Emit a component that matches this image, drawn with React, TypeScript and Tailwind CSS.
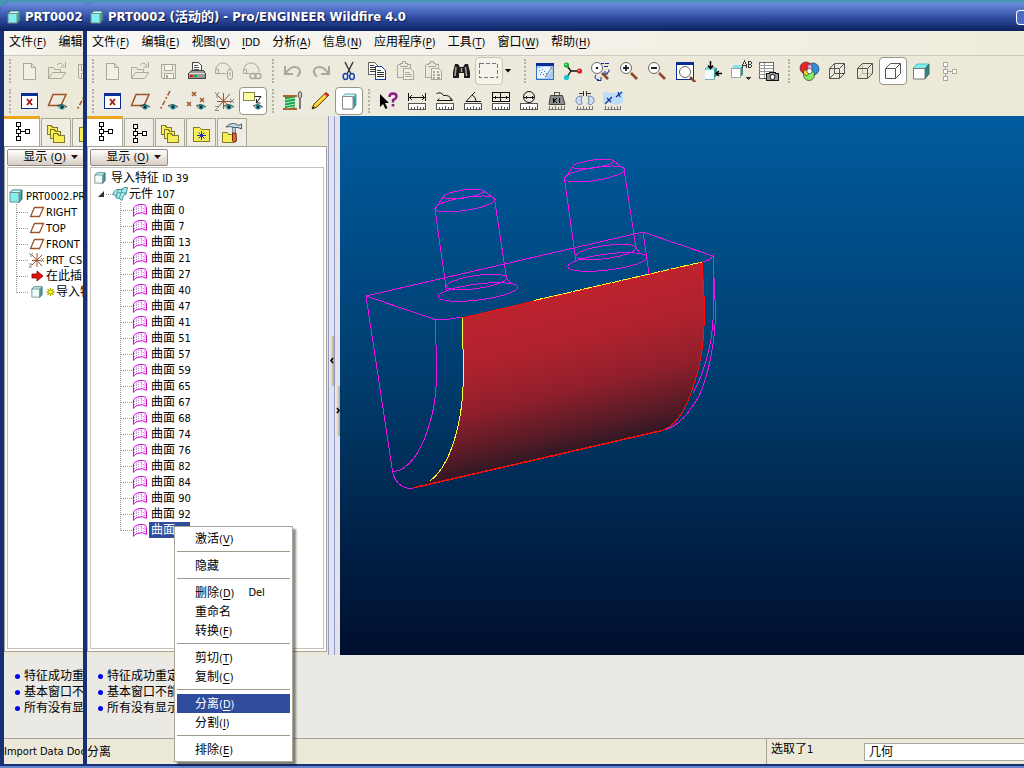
import { Fragment, type ReactNode } from "react"
import clsx from "clsx"

const GREY = "#aca899"
const BROWN = "#9c5428"
const NAVY = "#0a2c96"

type IconProps = { children: ReactNode; size?: number }
const Icon = ({ children, size = 22 }: IconProps) => (
    <svg width={size} height={size} viewBox={`0 0 ${size} ${size}`} fill="none" shapeRendering="crispEdges" className="shrink-0">
        {children}
    </svg>
)

/* small parts shared by several icons */
const Eye = ({ x = 16, y = 17 }: { x?: number; y?: number }) => (
    <g shapeRendering="auto">
        <path d={`M${x - 5} ${y - 1}Q${x} ${y - 4} ${x + 5} ${y}`} stroke="#333" />
        <path d={`M${x - 4} ${y}Q${x} ${y - 3} ${x + 4} ${y}Q${x} ${y + 4} ${x - 4} ${y}Z`} fill="#cfe8e6" stroke="#568" strokeWidth=".5" />
        <circle cx={x} cy={y} r="2.4" fill="#0d7f80" />
        <circle cx={x} cy={y} r="1" fill="#012" />
    </g>
)

const Ruler = () => (
    <>
        <rect x="2.5" y="13.500" width="17" height="6" fill="#fff" stroke="#555" />
        <path d="M5.500 20v-3M8.500 20v-3M11.500 20v-4M14.500 20v-3M17.500 20v-3" stroke="#555" />
    </>
)

const Ticks = () => (
    <path d="M2 19.500h17M3.500 16v4M6.500 17v3M9.500 16v4M12.500 17v3M15.500 16v4M18.500 16v4" stroke="#777" />
)

const Lens = ({ children, x = 8, y = 8 }: { children?: ReactNode; x?: number; y?: number }) => (
    <g shapeRendering="auto">
        <path d={`M${x + 5} ${y + 5}l6 6`} stroke="#8a4b2a" strokeWidth="2.600" />
        <circle cx={x} cy={y} r="5.500" fill="#fff" stroke="#666" />
        {children}
    </g>
)

const Nodes = ({ color = "#000" }: { color?: string }) => (
    <g stroke={color}>
        <path d="M7.500 7v2M7.500 14v2M10 11.500h4" />
        <rect x="5.500" y="2.500" width="4" height="4" fill="#fff" />
        <rect x="5.500" y="9.500" width="4" height="4" fill="#fff" />
        <rect x="5.500" y="16.500" width="4" height="4" fill="#fff" />
        <rect x="14.500" y="9.500" width="4" height="4" fill="#fff" />
    </g>
)

const Solid = () => (
    <g shapeRendering="auto">
        <path d="M3 8.500L7 4h12l-4 4.500z" fill="#7df0f2" stroke="#4bbcc0" />
        <path d="M15 8.500L19 4v10l-4 5z" fill="#2f8284" stroke="#407070" />
        <path d="M3.500 8.500H15V19H3.500z" fill="#fff" stroke="#777" />
    </g>
)

const Wire = ({ mode }: { mode: "all" | "dim" | "front" }) => (
    <g stroke="#555">
        {mode !== "front" && (
            <path d="M8.500 4v9.500H19M3.500 18.500l5-5" stroke={mode === "dim" ? "#b9b6a8" : "#555"} shapeRendering="auto" />
        )}
        <path d="M3.500 8.500h10v10h-10zM3.500 8.500l5-5h10v10l-5 5M13.500 8.500l5-5" shapeRendering="auto" />
    </g>
)

const Clipboard = () => (
    <>
        <path d="M3.500 4.500h3v-1h2v-2h3v2h2v1h3v3M3.500 4.500v13h5M6 6.500h8" stroke={GREY} />
        <path d="M9.500 8.500h7l3 3v8h-10z" fill="#f2f0e4" stroke={GREY} />
    </>
)

const icons = {
    blank: <path d="M4.500 3.500h8l4 4v12h-12zM12.500 3.500v4h4" stroke={GREY} fill="#f2f0e6" />,
    open: (
        <>
            <path d="M1.500 18.500v-11h5l1 2h6v3M1.500 18.500l4-6h13l-4 6z" stroke={GREY} shapeRendering="auto" />
            <path d="M10 5q4-4 7 1M18.500 2v5h-5" stroke={GREY} shapeRendering="auto" />
        </>
    ),
    save: (
        <>
            <path d="M3.500 4.500h14v14h-13l-1-1z" stroke={GREY} />
            <path d="M6.500 4.500h8v6h-8zM6.500 13.500h9v5h-9z" fill="#f6f4ec" stroke={GREY} />
            <path d="M9 15v3" stroke={GREY} strokeWidth="2" />
        </>
    ),
    print: (
        <>
            <path d="M6.500 11V2.500h6l3 3V11" fill="#fff" stroke="#444" />
            <path d="M8 5.500h4M8 7.500h5M8 9.500h5" stroke="#555" />
            <path d="M2.500 13.500l3-3h12l2 3v5h-17z" fill="#9a9a98" stroke="#444" />
            <path d="M3 13.500h16" stroke="#ddd" />
            <path d="M4 16h3" stroke="#d11" strokeWidth="2" />
            <path d="M8 16h3" stroke="#1a3" strokeWidth="2" />
        </>
    ),
    sendPart: (
        <g stroke={GREY} shapeRendering="auto">
            <path d="M1.500 13.500V10Q3 3 9 3t8 7M1.500 13.500h11M1.500 9.500h3v4" />
            <rect x="13.500" y="9.500" width="5" height="10" rx="2.500" />
            <path d="M16 12v4" />
        </g>
    ),
    sendLink: (
        <g stroke={GREY} shapeRendering="auto">
            <path d="M1.500 13.500V10Q3 3 9 3t8 7v2M1.500 13.500h6M1.500 9.500h3v4" />
            <rect x="8" y="13.500" width="6" height="5" rx="2.500" strokeWidth="1.400" />
            <rect x="13" y="13.500" width="6" height="5" rx="2.500" strokeWidth="1.400" />
        </g>
    ),
    undo: <path d="M3 6v8h8M3.500 13.500Q10 4 17 8.500q3 4-2 8" stroke={GREY} strokeWidth="2" shapeRendering="auto" />,
    redo: <path d="M19 6v8h-8M18.500 13.500Q12 4 5 8.500q-3 4 2 8" stroke={GREY} strokeWidth="2" shapeRendering="auto" />,
    cut: (
        <g shapeRendering="auto">
            <path d="M7 2l6 12M15 2L9 14" stroke="#333" strokeWidth="1.400" />
            <ellipse cx="7.500" cy="16.500" rx="2.300" ry="3" stroke="#1b3fb5" strokeWidth="1.500" />
            <ellipse cx="14" cy="16.500" rx="2.300" ry="3" stroke="#1b3fb5" strokeWidth="1.500" />
        </g>
    ),
    copy: (
        <>
            <path d="M2.500 2.500h6l3 3v9h-9z" fill="#fff" stroke="#666" />
            <path d="M4 5.500h4M4 7.500h5M4 9.500h5M4 11.500h5" stroke="#333" />
            <path d="M9.500 6.500h6l4 4v9h-10z" fill="#fff" stroke="#153fa8" />
            <path d="M11 10.500h4M11 12.500h7M11 14.500h7M11 16.500h7" stroke="#333" />
        </>
    ),
    paste: (
        <>
            <Clipboard />
            <path d="M11 12.500h5M11 14.500h7M11 16.500h7" stroke={GREY} />
        </>
    ),
    pasteSpecial: (
        <>
            <Clipboard />
            <path d="M11 11.500h2M15 11.500h2M11 14.500h2M15 14.500h3M11 17.500h2M15 17.500h3" stroke={GREY} strokeWidth="2" />
        </>
    ),
    find: (
        <g shapeRendering="auto">
            <path d="M5 4h3l2 3h3l2-3h3l2 8v6h-6v-5h-5v5H3v-6z" fill="#1c1c1c" />
            <path d="M6 7l-1 9M15.500 7l1 9M11.500 8v4" stroke="#a9a9a9" strokeWidth="1.500" />
        </g>
    ),
    select: <rect x="1.500" y="3.500" width="18" height="14" stroke="#777" strokeDasharray="4 2" />,
    repaint: (
        <>
            <rect x="2.500" y="3.500" width="17" height="16" fill="#a9cdf2" stroke="#2f6fc4" />
            <path d="M2 4h18" stroke={NAVY} strokeWidth="3" />
            <path d="M3 9q7-3 12-2l3 3-7 8H3z" fill="#eef6fd" shapeRendering="auto" />
            <path d="M5.500 10v1M8.500 9v1M7.500 12v1M10.500 11v1M9.500 14v1M12.500 13v1M6.500 14v1M11.500 16v1" stroke="#2b7bd0" />
            <path d="M12 16l6-9" stroke="#777" shapeRendering="auto" />
        </>
    ),
    spin: (
        <g shapeRendering="auto">
            <path d="M5 6l4 5h8M9 11l-4 6" stroke="#111" strokeWidth="1.300" />
            <circle cx="4.500" cy="5" r="2.600" fill="#19b32b" />
            <circle cx="17.500" cy="11" r="2.600" fill="#e01717" />
            <circle cx="4.500" cy="17.500" r="2.600" fill="#19c3cf" />
            <circle cx="4" cy="4.500" r=".8" fill="#bfffc5" />
            <circle cx="17" cy="10.500" r=".8" fill="#ffc1c1" />
        </g>
    ),
    orient: (
        <>
            <Lens x={7} y={8}><circle cx="7" cy="8" r="1.300" fill="#222" /></Lens>
            <path d="M11 3.500h3M15 3.500h4M14 6.500h4M19 9.500q1 3-3 4M15 11v3h3M6 15q-3 4 3 5M11 17v3.500H7" stroke={NAVY} shapeRendering="auto" />
        </>
    ),
    zoomIn: <Lens><path d="M5 8h6M8 5v6" stroke="#222" strokeWidth="1.800" /></Lens>,
    zoomOut: <Lens><path d="M5 8h6" stroke="#222" strokeWidth="1.800" /></Lens>,
    refit: (
        <>
            <rect x="2.500" y="2.500" width="17" height="17" fill="#fff" stroke={NAVY} />
            <path d="M2 3.500h18" stroke={NAVY} strokeWidth="3" />
            <Lens x={11} y={12} />
        </>
    ),
    reorient: (
        <>
            <path d="M3 9l2-2h9l-2 3v9H3z" fill="#7de3e6" stroke="#8aa" />
            <path d="M12 10l3-3v8l-3 4z" fill="#3b9295" />
            <path d="M3 10h9v9H3z" fill="#eefcfc" />
            <path d="M8.500 1v7M6 5.500l2.500 3 2.500-3M20 13.500h-6M17 11l-3 2.500 3 2.500" stroke="#000" strokeWidth="1.500" shapeRendering="auto" />
        </>
    ),
    views: (
        <>
            <path d="M1 9l3-4h8l-2 4z" fill="#7de3e6" />
            <path d="M10 9l3-4v9l-3 4z" fill="#3b9295" />
            <path d="M1.500 8.500h9v9h-9z" fill="#fff" stroke="#9aa" />
            <path d="M12.500 8V4M16.500 8V4M13 4l1.500-3L16 4M13 5.500h3M18.500 8V1.500H21M18.500 4.500H21M18.500 7.500H21M21.500 2v2M21.500 5v2" stroke="#333" />
            <path d="M15 17h6l-3 3z" fill="#333" />
        </>
    ),
    viewManager: (
        <>
            <rect x="1.500" y="2.500" width="14" height="16" fill="#fff" stroke="#666" />
            <path d="M1 5.500h14M1 8.500h14M1 11.500h14M1 14.500h14M6.500 3v15" stroke="#999" />
            <path d="M8.500 13.500h3v-1h6v1h3v7h-12z" fill="#999" stroke="#111" />
            <circle cx="14.500" cy="17" r="2.500" fill="#fff" stroke="#111" shapeRendering="auto" />
        </>
    ),
    colors: (
        <g shapeRendering="auto" stroke="#333" strokeWidth=".7">
            <circle cx="8" cy="8" r="6" fill="#ee2222" />
            <circle cx="15" cy="9" r="6" fill="#2b8fe0" />
            <circle cx="11" cy="15" r="5.500" fill="#86ec62" />
            <path d="M9 7q2-4 4-3 2 3 1 6l-4 1z" fill="#f0a5dd" />
            <path d="M5 12q2-3 5-2l1 4-3 2z" fill="#f6e02c" />
            <circle cx="11.500" cy="11" r="2.700" fill="#fff" />
        </g>
    ),
    wireframe: <Wire mode="all" />,
    hiddenLine: <Wire mode="dim" />,
    noHidden: <Wire mode="front" />,
    shaded: <Solid />,
    tree: <Nodes color={GREY} />,
    stop: (
        <>
            <rect x="2.500" y="3.500" width="16" height="15" fill="#fff" stroke={NAVY} />
            <path d="M2 4.500h17" stroke={NAVY} strokeWidth="3" />
            <path d="M8 9l5 6M13 9l-5 6" stroke="#a01818" strokeWidth="1.800" shapeRendering="auto" />
        </>
    ),
    planes: (
        <>
            <path d="M6 4.500h13l-5 11H1.500z" stroke={BROWN} strokeWidth="1.500" shapeRendering="auto" />
            <Eye x={15} />
        </>
    ),
    axes: (
        <>
            <path d="M12 1L2 20" stroke={BROWN} strokeWidth="1.500" strokeDasharray="5 2 2 2" shapeRendering="auto" />
            <Eye x={15} />
        </>
    ),
    points: (
        <>
            <path d="M6 2l4 4M10 2L6 6M14 8l4 4M18 8l-4 4M1 12l4 4M5 12l-4 4" stroke={BROWN} strokeWidth="1.400" shapeRendering="auto" />
            <Eye x={15} />
        </>
    ),
    csys: (
        <>
            <path d="M9.500 3v16M3 5l13 12M16 4L4 17M3 11.500h14" stroke={BROWN} shapeRendering="auto" />
            <path d="M1 2l2 3 2-3M3 5v3M16 9l4 4M20 9l-4 4M1 16.500h4l-4 4h4" stroke="#888" shapeRendering="auto" />
            <Eye x={15} />
        </>
    ),
    notes: (
        <>
            <rect x="1.500" y="2.500" width="11" height="8" fill="#ffffa8" stroke="#87874a" />
            <path d="M13 6.500h6L14.500 13M14.500 9v4h4" stroke="#222" shapeRendering="auto" />
            <Eye />
        </>
    ),
    spool: (
        <g shapeRendering="auto">
            <path d="M1 5h14v2H1zM1 18h14v2H1z" fill="#a9652c" />
            <path d="M3 7h10v11H3z" fill="#1ba04c" />
            <path d="M3 10l10-2M3 13l10-2M3 16l10-2M5 18l8-1.500" stroke="#b9f6c0" />
            <path d="M18 2v17" stroke="#555" strokeWidth="1.500" />
            <ellipse cx="18" cy="5" rx="1.700" ry="3.500" fill="#ccc" stroke="#555" />
        </g>
    ),
    pencil: (
        <g shapeRendering="auto">
            <path d="M2 19l2-5L16 2.500l3 2.500L7 17z" fill="#f7c920" stroke="#604510" />
            <path d="M14 4.500L16 2.500l3 2.500-2 2z" fill="#d2302c" />
            <path d="M2 19l1-3 2 2z" fill="#222" />
            <path d="M6 14L16 5" stroke="#fff09a" />
        </g>
    ),
    cube: (
        <g shapeRendering="auto">
            <path d="M4.500 7l2.500-3h11v11l-3 4H4.500z" fill="#d8fbfb" stroke="#62a9aa" />
            <path d="M15 7l3-3v11l-3 4z" fill="#3b9ea0" />
            <path d="M4.500 6.500H15V19H4.500z" fill="#fff" stroke="#888" />
        </g>
    ),
    help: (
        <g shapeRendering="auto">
            <path d="M2 4v13l3-3 2.500 5 2-1L7 13h4z" fill="#000" />
            <path d="M11.500 7q0-3.500 3.500-3.500t3.500 3q0 2-3.500 3.500v2.500" stroke="#8b1a8b" strokeWidth="2.400" />
            <path d="M13.700 14h2.600v2.500h-2.600z" fill="#8b1a8b" />
        </g>
    ),
    distance: (
        <>
            <path d="M2.500 3v8M19.500 3v8M3 7.500h16M6 5L3.500 7.500 6 10M16 5l2.500 2.500L16 10" stroke="#111" />
            <Ruler />
        </>
    ),
    curveLength: (
        <>
            <path d="M2.500 3.500q5-2 7 2 6-1 9 5M3 10.500h15M5.500 8.500l-2 2M16 8.500l2 2" stroke="#111" shapeRendering="auto" />
            <Ruler />
        </>
    ),
    angle: (
        <>
            <path d="M13 2L4 11.500h15M10 5q4 2 4 6" stroke="#111" shapeRendering="auto" />
            <Ruler />
        </>
    ),
    area: (
        <>
            <path d="M2.500 2.500h17v9h-17zM10.500 2v10M3 7.500h16M5 6v3M16 6v3" stroke="#111" />
            <Ruler />
        </>
    ),
    diameter: (
        <>
            <circle cx="11" cy="7" r="5.500" stroke="#111" shapeRendering="auto" />
            <path d="M6 7.500h10M8 6v3M14 6v3" stroke="#111" />
            <Ruler />
        </>
    ),
    mass: (
        <>
            <path d="M8.500 5V2.500h5V5" stroke="#555" strokeWidth="1.500" />
            <path d="M4.500 5.500h12l2.500 9H3z" fill="#8c8c8c" stroke="#444" shapeRendering="auto" />
            <path d="M7.500 8v5M11 8l-3 2.500 3 2.500M13.500 8v5" stroke="#111" />
            <Ticks />
        </>
    ),
    section: (
        <>
            <path d="M8 6Q1 6 2 12q2 4 6 2-2-4 0-8zM14 6q7 0 6 6-2 4-6 2 2-4 0-8z" fill="#cfe0f5" stroke="#7089ad" shapeRendering="auto" />
            <path d="M5 3.500h5M12 3.500h5M9.500 1v5M12.500 1v5" stroke="#333" />
            <Ticks />
        </>
    ),
    curvature: (
        <>
            <path d="M1 2q7 1 12 1t8-2v11q-5 4-10 2T1 13z" fill="#bcdcf8" shapeRendering="auto" />
            <path d="M3 14l7-7M14 7l6-5M5 8l4 4M16 2l2 5" stroke="#12309a" strokeWidth="1.200" shapeRendering="auto" />
            <Ticks />
        </>
    ),
    tabTree: <Nodes />,
    tabFolders: (
        <g fill="#f7ee58" stroke="#807a28">
            <path d="M2.500 3.500h4l1 2h5v7h-10z" />
            <path d="M5.500 7.500h4l1 2h5v7h-10z" />
            <path d="M8.500 11.500h4l1 2h6v7h-11z" />
        </g>
    ),
    tabFavorites: (
        <>
            <path d="M3.500 5.500h6l2 2h8v12h-16z" fill="#f7ee58" stroke="#807a28" />
            <path d="M11.500 9v9M7 13.500h9M8.500 10.500l6 6M14.500 10.500l-6 6" stroke="#1534b0" shapeRendering="auto" />
        </>
    ),
    tabTools: (
        <g shapeRendering="auto">
            <path d="M1.500 10.500h5l1 2h5v8h-11z" fill="#f7ee58" stroke="#807a28" />
            <path d="M11.500 5h3v7h-3z" fill="#bcd" stroke="#456" strokeWidth=".6" />
            <path d="M5 5q5-5 10-3l2 1.500 3.500-1.500v5l-3.500-1.500h-4q-3-1.500-8-.5z" fill="#c4dbe6" stroke="#3c5160" strokeWidth=".9" />
            <path d="M11.500 11h3.500l.5 8q-2 2.500-4 0z" fill="#e26a28" stroke="#6b2a10" />
        </g>
    ),
}

type IconName = keyof typeof icons
type Tool = { id: IconName; name: string; pressed?: boolean; disabled?: boolean; menu?: boolean }

const fileTools: Tool[] = [
    { id: "blank", name: "新建", disabled: true },
    { id: "open", name: "打开", disabled: true },
    { id: "save", name: "保存", disabled: true },
    { id: "print", name: "打印" },
    { id: "sendPart", name: "发送附件", disabled: true },
    { id: "sendLink", name: "发送链接", disabled: true },
]

const editTools: Tool[] = [
    { id: "undo", name: "撤消", disabled: true },
    { id: "redo", name: "重做", disabled: true },
    { id: "cut", name: "剪切" },
    { id: "copy", name: "复制" },
    { id: "paste", name: "粘贴", disabled: true },
    { id: "pasteSpecial", name: "选择性粘贴", disabled: true },
    { id: "find", name: "查找" },
    { id: "select", name: "选取框", menu: true },
]

const viewTools: Tool[] = [
    { id: "repaint", name: "重画" },
    { id: "spin", name: "旋转中心" },
    { id: "orient", name: "定向模式" },
    { id: "zoomIn", name: "放大" },
    { id: "zoomOut", name: "缩小" },
    { id: "refit", name: "重新调整" },
    { id: "reorient", name: "重定向" },
    { id: "views", name: "已命名视图" },
    { id: "viewManager", name: "视图管理器" },
]

const displayTools: Tool[] = [
    { id: "colors", name: "外观库" },
    { id: "wireframe", name: "线框" },
    { id: "hiddenLine", name: "隐藏线" },
    { id: "noHidden", name: "无隐藏线", pressed: true },
    { id: "shaded", name: "着色" },
    { id: "tree", name: "模型树", disabled: true },
]

const datumTools: Tool[] = [
    { id: "stop", name: "关闭" },
    { id: "planes", name: "平面显示" },
    { id: "axes", name: "轴显示" },
    { id: "points", name: "点显示" },
    { id: "csys", name: "坐标系显示" },
    { id: "notes", name: "注释显示", pressed: true },
]

const sketchTools: Tool[] = [
    { id: "spool", name: "修复" },
    { id: "pencil", name: "草绘" },
    { id: "cube", name: "实体", pressed: true },
]

const measureTools: Tool[] = [
    { id: "help", name: "帮助" },
    { id: "distance", name: "距离" },
    { id: "curveLength", name: "长度" },
    { id: "angle", name: "角度" },
    { id: "area", name: "区域" },
    { id: "diameter", name: "直径" },
    { id: "mass", name: "质量属性" },
    { id: "section", name: "剖面" },
    { id: "curvature", name: "曲率" },
]

const menus = ["文件(&F)", "编辑(&E)", "视图(&V)", "&IDD", "分析(&A)", "信息(&N)", "应用程序(&P)", "工具(&T)", "窗口(&W)", "帮助(&H)"]

const surfaces = [0, 7, 13, 21, 27, 40, 47, 41, 51, 57, 59, 65, 67, 68, 74, 76, 82, 84, 90, 92]

const contextMenu = [
    [{ text: "激活(&V)" }],
    [{ text: "隐藏" }],
    [{ text: "删除(&D)", shortcut: "Del" }, { text: "重命名" }, { text: "转换(&F)" }],
    [{ text: "剪切(&T)" }, { text: "复制(&C)" }],
    [{ text: "分离(&D)", active: true }, { text: "分割(&I)" }],
    [{ text: "排除(&E)" }],
]

/* Han runs are set one size larger than the Latin ones, & marks the access key */
const Label = ({ text }: { text: string }) => (
    <span className="whitespace-pre">
        {text.split(/([\u4e00-\u9fff]+)/).filter(Boolean).map((part, i) => {
            if (/[\u4e00-\u9fff]/.test(part)) return <span key={i} className="text-[12px]">{part}</span>
            const [before, after] = part.split("&")
            return (
                <span key={i} className="text-[11px]">
                    {before}
                    {after && <><u className="underline-offset-2">{after[0]}</u>{after.slice(1)}</>}
                </span>
            )
        })}
    </span>
)

const Grip = () => (
    <span className="flex w-3 shrink-0 justify-center">
        <span className="h-6 border-l-2 border-dotted border-[#b5b2a2]" />
    </span>
)

const ToolGroup = ({ tools }: { tools: Tool[] }) => (
    <div className="flex shrink-0 items-center">
        <Grip />
        {tools.map((tool) => (
            <Fragment key={tool.id}>
                <button
                    type="button"
                    aria-label={tool.name}
                    aria-pressed={tool.pressed}
                    disabled={tool.disabled}
                    className={clsx(
                        "flex h-7 w-7 shrink-0 items-center justify-center rounded",
                        tool.pressed && "border border-[#98958a] bg-white",
                        tool.menu && "border border-[#c9c6b8] bg-[#f5f3ea]"
                    )}
                >
                    <Icon>{icons[tool.id]}</Icon>
                </button>
                {tool.menu && (
                    <button type="button" aria-label="选取选项" className="flex h-7 w-4 items-center pl-[2px]">
                        <svg width="6" height="4" viewBox="0 0 6 4"><path d="M0 0h6L3 3.500z" /></svg>
                    </button>
                )}
            </Fragment>
        ))}
    </div>
)

const Surface = () => (
    <svg width="16" height="16" viewBox="0 0 16 16" fill="none" className="shrink-0">
        <path d="M1.500 14.500V6Q3 2.500 8 2.500h3.500q2.500 0 3 3v7q-4-3-9-1-3 1-4 3z" fill="#fdeefd" />
        <path d="M4 5v7M6.500 4v7M9.500 4v7M12.500 5v7M2 8q5-4 12-1M2 11q5-4 12-1" stroke="#c9a6cd" strokeDasharray="1 1" shapeRendering="crispEdges" />
        <path d="M1.500 14.500V6Q3 2.500 8 2.500h3.500q2.500 0 3 3v7q-4-3-9-1-3 1-4 3z" stroke="#d413d4" />
    </svg>
)

const PartIcon = ({ small }: { small?: boolean }) => (
    <svg width={small ? 12 : 14} height={small ? 12 : 14} viewBox="0 0 14 14" className="shrink-0">
        <path d="M1 3.500L3.500 1H13v9l-3 3.500z" fill="#4d9c9e" stroke="#356e70" />
        <path d="M1 3.500h9V13H1z" fill={small ? "#effdfd" : "#7ff0f0"} stroke="#7a8a8a" />
        <path d="M2 3l2-1.500h8L10.500 3z" fill="#d5ffff" />
    </svg>
)

const Branch = ({ last }: { last?: boolean }) => (
    <svg width="12" height="16" viewBox="0 0 12 16" className="shrink-0" shapeRendering="crispEdges">
        <path d={`M.5 0V${last ? 9 : 16}M1 8.500h11`} stroke="#999" strokeDasharray="1 1" />
    </svg>
)

const PlaneIcon = () => (
    <svg width="16" height="16" viewBox="0 0 16 16" fill="none" className="shrink-0">
        <path d="M5.500 3.500h9l-4 9h-9z" stroke={BROWN} strokeWidth="1.300" />
    </svg>
)

const ModelTree = () => (
    <div className="flex flex-col">
        <div className="h-[18px] border-b border-[#c5c3b8]" />
        <ul className="pt-[2px] pl-px leading-4">
            <li className="flex h-4 items-center gap-[3px]"><PartIcon /><Label text="PRT0002.PR" /></li>
            {["RIGHT", "TOP", "FRONT"].map((name) => (
                <li key={name} className="flex h-4 items-center gap-px pl-[7px]">
                    <Branch /><PlaneIcon /><Label text={name} />
                </li>
            ))}
            <li className="flex h-4 items-center gap-px pl-[7px]">
                <Branch />
                <svg width="16" height="16" viewBox="0 0 16 16" fill="none" className="shrink-0">
                    <path d="M8 1v14M3 3l10 11M13 3L3 13M3 8.500h9" stroke={BROWN} />
                    <path d="M0 1l2 2 2-2M2 3v2M12 6l3 4M15 6l-3 4M0 12h3l-3 3h3" stroke="#888" />
                </svg>
                <Label text="PRT_CS" />
            </li>
            <li className="flex h-4 items-center gap-px pl-[7px]">
                <Branch />
                <svg width="16" height="16" viewBox="0 0 16 16" className="shrink-0">
                    <path d="M3 6h5V3l6 5-6 5v-3H3z" fill="#e01010" stroke="#8d0000" strokeWidth=".8" />
                </svg>
                <Label text="在此插" />
            </li>
            <li className="flex h-4 items-center gap-px pl-[7px]">
                <Branch last />
                <span className="flex w-4 shrink-0 justify-center"><PartIcon small /></span>
                <svg width="9" height="10" viewBox="0 0 8 10" className="shrink-0">
                    <path d="M4 1v8M0 5h8M1 2l6 6M7 2L1 8" stroke="#b5b000" strokeWidth="1.300" />
                    <circle cx="4" cy="5" r="1.500" fill="#ffff20" />
                </svg>
                <Label text="导入特" />
            </li>
        </ul>
    </div>
)

const SurfaceTree = () => (
    <ul className="pt-[2px] pl-[3px] leading-4">
        <li className="flex h-4 items-center gap-[5px]"><PartIcon small /><Label text="导入特征 ID 39" /></li>
        <li className="flex h-4 items-center gap-px pl-[3px]">
            <svg width="8" height="8" viewBox="0 0 8 8"><path d="M7 1v6H1z" fill="#333" /></svg>
            <svg width="22" height="16" viewBox="0 0 22 16" fill="none">
                <path d="M0 8.500h7" stroke="#999" strokeDasharray="1 1" />
                <path d="M7 8q1.500-5 6-4.500 2 1 4-1 2-1.500 4.500-1L20 8.500q-3-.5-4 6-3-3-5.500-2.500Q9.500 8 7 8z" fill="#a6ecef" stroke="#3d8f93" />
                <path d="M13 3.500q-3 2-2.500 8M17 3q-3 4-3.500 9M11 7q3-1 9 0" stroke="#3d8f93" strokeWidth=".8" />
            </svg>
            <Label text="元件 107" />
        </li>
        {surfaces.map((id) => (
            <li key={id} className="flex h-4 items-center pl-[26px]">
                <Branch /><Surface />
                <span className="pl-[3px]"><Label text={`曲面 ${id}`} /></span>
            </li>
        ))}
        <li className="flex h-4 items-center pl-[26px]">
            <Branch last /><Surface />
            <span className="ml-px h-4 w-[41px] bg-[#2f4d9c] pl-[2px] text-white"><Label text="曲面" /></span>
        </li>
    </ul>
)

const Sash = ({ glyph, name, className }: { glyph: string; name: string; className: string }) => (
    <div className="flex w-[6px] flex-col justify-center border-l border-[#9499c4] bg-[#e2e3ec]">
        <button
            type="button"
            aria-label={name}
            className={clsx("flex h-[50px] items-center justify-center bg-linear-to-r from-[#f4efe6] via-[#e0d9cc] to-[#a9a698]", className)}
        >
            <svg width="4" height="7" viewBox="0 0 4 7" fill="none"><path d={glyph} stroke="#000" strokeWidth="1.600" /></svg>
        </button>
    </div>
)

const edge = "#e814e8"

const Pin = ({ shift }: { shift?: string }) => (
    <g transform={shift}>
        <ellipse cx="463.500" cy="194" rx="20.500" ry="4" transform="rotate(-8 463.500 194)" />
        <ellipse cx="465" cy="204" rx="30.500" ry="6.500" transform="rotate(-9 465 204)" />
        <path d="M443 197l-8 12M483 190l11.500 9M435 209l11.500 82M494.500 199l12 79 4 5" />
        <ellipse cx="476.500" cy="282" rx="30.500" ry="6.500" transform="rotate(-8 476.500 282)" />
        <ellipse cx="478" cy="292" rx="40" ry="8" transform="rotate(-7 478 292)" />
    </g>
)

const Viewport = () => (
    <div className="min-w-0 flex-1 overflow-hidden bg-linear-to-b from-[#005c9f] via-[#003c6c] to-[#000f2e]">
        <svg viewBox="340 116 684 539" preserveAspectRatio="xMinYMin meet" className="h-full w-full" fill="none">
            <defs>
                <linearGradient id="face" gradientUnits="userSpaceOnUse" x1="560" y1="295" x2="596" y2="449">
                    <stop offset="0" stopColor="#bd232f" />
                    <stop offset=".3" stopColor="#b0222e" />
                    <stop offset=".6" stopColor="#8f1f2b" />
                    <stop offset=".85" stopColor="#561b26" />
                    <stop offset="1" stopColor="#2a1824" />
                </linearGradient>
            </defs>
            <g stroke={edge} shapeRendering="crispEdges">
                <Pin />
                <Pin shift="translate(129.500 -30)" />
                <path d="M366 296L643 232L713 256M643 232L649 274M366 296L435 319.500L444 320L462 317" />
                <path d="M366 296L392.500 471C394 481 401 488 410 488.500L418 487" />
                <path d="M435.500 320V335C438 375 437 402 430 422C423 448 410 471 393 471.500" />
                <path d="M703 262Q711 260 713 256V320C712 345 703 376 693 393" />
                <path d="M713 256L715 300V325C713 355 706 382 698 398C689 412 680 426 664 430" />
            </g>
            <path
                d="M462 318L702 262L704 295C705 335 703 350 698 370C690 402 680 424 662 430.500L418 487C440 478 450 456 457 430C465 400 464 370 462 318Z"
                fill="url(#face)"
            />
            <g shapeRendering="crispEdges">
                <path d="M462 318L702 262L704 295C705 335 703 350 698 370C690 402 680 424 662 430.500L414 488" stroke="#ff0c0c" />
                <path d="M415 487.500L662 430.500" stroke="#ff0c0c" strokeWidth="1.500" />
                <path d="M462 318C464 370 465 400 457 430C451 455 443 471 430 481" stroke="#ffff30" />
                <path d="M534 300.500L702 262" stroke="#ffff30" strokeDasharray="9 1" />
            </g>
        </svg>
    </div>
)

type ProWindowProps = {
    title: string
    menuItems: string[]
    rows: Tool[][][]
    tabs: IconName[]
    treeBody: ReactNode
    messages: string[]
    status: ReactNode
    children?: ReactNode
}

const ProWindow = ({ title, menuItems, rows, tabs, treeBody, messages, status, children }: ProWindowProps) => (
    <section className="flex h-full min-w-0 flex-1 flex-col overflow-hidden rounded-tl-lg border-b-2 border-[#6685cf] bg-[#173074]">
        <header className="flex h-7 shrink-0 items-center bg-linear-to-b from-[#6c8be0] via-[#3350a6] to-[#0b225f] pl-[7px]">
            <PartIcon />
            <h1 className="flex-1 pl-1 text-[13px] font-bold whitespace-nowrap text-white [text-shadow:1px_1px_1px_#0a1c50]">{title}</h1>
            {children && (
                <button type="button" aria-label="最小化" className="h-[15px] w-2 rounded-l-sm border border-r-0 border-white bg-[#4b6cc8]" />
            )}
        </header>
        <div className="flex min-h-0 flex-1 flex-col border-b-2 border-l-4 border-[#173074] bg-[#ece9d8]">
            <nav className="flex h-[25px] shrink-0 items-center gap-3 border-b border-[#cdcabb] bg-linear-to-r from-[#f8f7f4] to-[#efebdc] pb-[2px] pl-[5px]">
                {menuItems.map((item) => (
                    <button key={item} type="button" className="shrink-0"><Label text={item} /></button>
                ))}
            </nav>
            <div className="shrink-0 overflow-hidden bg-linear-to-r from-[#edeae0] to-[#ece9d8]">
                {rows.map((groups, i) => (
                    <div key={i} className="flex h-[30px] items-center">
                        {groups.map((tools) => <ToolGroup key={tools[0].id} tools={tools} />)}
                    </div>
                ))}
            </div>
            <main className="flex min-h-0 flex-1">
                <div className="flex w-[240px] shrink-0 flex-col pb-[3px]">
                    <div className="flex h-[30px] shrink-0 items-end gap-px">
                        {tabs.map((tab, i) => (
                            <button
                                key={i}
                                type="button"
                                aria-label={`选项卡 ${i + 1}`}
                                className={clsx(
                                    "flex shrink-0 items-center justify-center border-r border-[#aaa796]",
                                    i === 0 ? "h-[30px] w-9 border-t-3 border-t-[#eda51e] bg-white pb-1" : "h-7 w-[30px] border-t border-l bg-[#f0eee4]"
                                )}
                            >
                                <Icon>{icons[tab]}</Icon>
                            </button>
                        ))}
                    </div>
                    <div className="flex min-h-0 flex-1 flex-col border border-[#a5a497] bg-white px-[2px] pb-[2px]">
                        <div className="flex h-5 shrink-0 items-center">
                            <button
                                type="button"
                                className="flex h-[17px] w-[78px] items-center justify-end gap-[5px] rounded-xs border border-[#948c84] bg-linear-to-b from-white to-[#d6cdc3] pr-[6px]"
                            >
                                <Label text="显示 (&O)" />
                                <svg width="7" height="4" viewBox="0 0 7 4"><path d="M0 0h7L3.500 4z" fill="#2a1010" /></svg>
                            </button>
                        </div>
                        <div className="min-h-0 flex-1 overflow-hidden border border-[#c5c3b8]">{treeBody}</div>
                    </div>
                </div>
                {children}
            </main>
            <div className="flex h-[84px] shrink-0 border-b border-[#a5a397] bg-[#eae9e4] pt-[13px]">
                <ul className="pl-[11px]">
                    {messages.map((line) => (
                        <li key={line} className="flex h-4 items-center gap-1">
                            <span className="h-[5px] w-[5px] rounded-full bg-[#0000ee]" />
                            <Label text={line} />
                        </li>
                    ))}
                </ul>
            </div>
            <footer className="flex h-[25px] shrink-0 items-center">{status}</footer>
        </div>
    </section>
)

const ContextMenu = () => (
    <div
        role="menu"
        className="absolute top-[526px] left-[174px] w-[119px] border border-[#aca899] bg-white p-[2px] shadow-[3px_3px_2px_rgba(0,0,0,0.45)]"
    >
        {contextMenu.map((group, i) => (
            <Fragment key={i}>
                {i > 0 && <div role="separator" className="my-[3px] h-[2px] border-t border-[#9c9a8b]" />}
                {group.map((item) => (
                    <button
                        key={item.text}
                        type="button"
                        role="menuitem"
                        className={clsx(
                            "flex h-[19px] w-full items-center pt-px pl-[18px]",
                            "active" in item && "bg-[#2f4d9c] text-white"
                        )}
                    >
                        <Label text={item.text} />
                        {"shortcut" in item && <span className="pl-[14px] text-[11px]">{item.shortcut}</span>}
                    </button>
                ))}
            </Fragment>
        ))}
    </div>
)

export default function App() {
    return (
        <div className="relative flex h-screen overflow-hidden bg-[#4a94b6] pt-[3px] font-['DejaVu_Sans_Condensed','Noto_Sans','Noto_Sans_CJK_SC',sans-serif] text-[12px] text-black">
            <div className="flex w-[83px] shrink-0">
                <ProWindow
                    title="PRT0002"
                    menuItems={["文件(&F)", "编辑"]}
                    rows={[[fileTools.slice(0, 3)], [datumTools.slice(0, 3)]]}
                    tabs={["tabTree", "tabFolders", "tabFavorites"]}
                    treeBody={<ModelTree />}
                    messages={["特征成功重", "基本窗口不", "所有没有显"]}
                    status={<Label text="Import Data Doc" />}
                />
            </div>
            <ProWindow
                title="PRT0002 (活动的) - Pro/ENGINEER Wildfire 4.0"
                menuItems={menus}
                rows={[
                    [fileTools, editTools, viewTools, displayTools],
                    [datumTools, sketchTools, measureTools],
                ]}
                tabs={["tabTree", "tabTree", "tabFolders", "tabFavorites", "tabTools"]}
                treeBody={<SurfaceTree />}
                messages={["特征成功重定", "基本窗口不能", "所有没有显示"]}
                status={
                    <>
                        <p className="flex-1"><Label text="分离" /></p>
                        <label htmlFor="filter" className="flex h-full w-[98px] items-center border-l border-[#a5a397] pb-1 pl-1">
                            <Label text="选取了1" />
                        </label>
                        <select id="filter" className="h-[18px] w-40 appearance-none border border-r-0 border-[#a5a5a5] bg-white pl-1 text-[12px] leading-4">
                            <option>几何</option>
                        </select>
                    </>
                }
            >
                <div className="flex shrink-0 pl-px">
                    <Sash glyph="M3 1L1 3.500 3 6" name="收起导航器" className="mb-[50px]" />
                    <Sash glyph="M1 1l2 2.500L1 6" name="展开浏览器" className="mt-[50px]" />
                </div>
                <Viewport />
            </ProWindow>
            <ContextMenu />
        </div>
    )
}
